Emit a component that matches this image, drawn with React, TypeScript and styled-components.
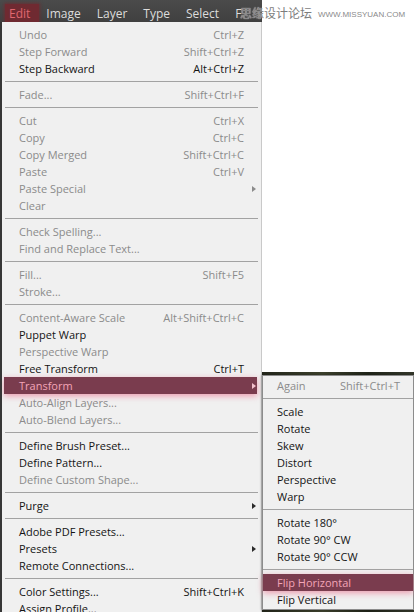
import React from "react";
import styled, { createGlobalStyle, css } from "styled-components";

const GlobalStyle = createGlobalStyle`
  html, body { margin: 0; padding: 0; background: #fff; }
  body { width: 414px; height: 612px; overflow: hidden; font-family: "Open Sans", "Noto Sans", sans-serif; }
`;

const Page = styled.div`
  position: relative;
  width: 414px;
  height: 612px;
  overflow: hidden;
  display: flex;
  flex-direction: column;
  background: #fff;
`;

const MenuBar = styled.div`
  width: 262px;
  height: 22px;
  box-sizing: border-box;
  padding: 4px 0 0 5px;
  display: flex;
  gap: 3px;
  background: linear-gradient(#4b4b4b, #404040);
  flex-shrink: 0;
  overflow: hidden;
`;

const BarItem = styled.div<{ $active?: boolean }>`
  height: 18px;
  padding: 0 9px 0 4px;
  display: flex;
  align-items: center;
  font-size: 12px;
  color: #dcdcdc;
  white-space: nowrap;
  ${(p) =>
    p.$active &&
    css`
      background: #6f2a31;
      color: #e0676f;
      box-shadow: 0 0 3px 1px rgba(111, 42, 49, 0.8);
    `}
`;

const Workspace = styled.div`
  flex: 1;
  display: flex;
  min-height: 0;
`;

const MainMenu = styled.div`
  width: 262px;
  box-sizing: border-box;
  flex-shrink: 0;
  background: #f0f0f0;
  border-left: 2px solid #363636;
  border-right: 1px solid #c9c9c9;
  padding-top: 4px;
  overflow: hidden;
`;

const Canvas = styled.div`
  flex: 1;
  display: flex;
  flex-direction: column;
`;

const Blank = styled.div`
  flex: 1;
  background: #fff;
`;

const Photo = styled.div`
  height: 240px;
  background: linear-gradient(90deg, #23261b, #3b3f2b 40%, #1f2318 70%, #33372a);
`;

const SubMenu = styled.div`
  position: absolute;
  left: 262px;
  top: 375px;
  width: 150px;
  padding: 1px 0;
  background: #f0f0f0;
  border: 1px solid #8c8c8c;
  box-shadow: -1px 0 2px rgba(0, 0, 0, 0.25);
`;

const Row = styled.div<{ $disabled?: boolean; $hot?: boolean; $sub?: boolean }>`
  height: 17px;
  display: grid;
  grid-template-columns: 1fr auto 13px;
  align-items: center;
  margin: ${(p) => (p.$sub ? "0" : "0 4px 0 2px")};
  padding-left: ${(p) => (p.$sub ? "14px" : "15px")};
  font-size: 11px;
  line-height: 17px;
  white-space: nowrap;
  color: ${(p) => (p.$disabled ? "#8b8b8b" : "#141414")};
  ${(p) =>
    p.$hot &&
    css`
      position: relative;
      background: #7a3c4e;
      color: #f3a5b7;
      box-shadow: 0 2px 6px rgba(232, 96, 128, 0.6);
    `}
`;

const Label = styled.span``;

const Shortcut = styled.span`
  text-align: right;
`;

const Arrow = styled.span<{ $color: string }>`
  justify-self: end;
  margin-right: 1px;
  width: 0;
  height: 0;
  border-top: 3.5px solid transparent;
  border-bottom: 3.5px solid transparent;
  border-left: 4px solid ${(p) => p.$color};
`;

const Separator = styled.div<{ $sub?: boolean }>`
  height: 1px;
  margin: ${(p) => (p.$sub ? "4px 0" : "4px 3px")};
  background: #a2a2a2;
`;

const Watermark = styled.div`
  position: absolute;
  top: 5px;
  left: 240px;
  display: flex;
  align-items: center;
  gap: 6px;
  white-space: nowrap;
  pointer-events: none;
`;

const WmCjk = styled.span`
  font-family: "Noto Sans CJK SC", sans-serif;
  font-size: 12px;
  line-height: 16px;
  color: #7d7d7d;
  text-shadow: 0 0 1px #fff;
`;

const WmUrl = styled.span`
  font-family: "Liberation Sans", sans-serif;
  font-size: 8px;
  color: #8a8a8a;
  padding-top: 2px;
`;

type Item =
  | { sep: true }
  | { label: string; sc?: string; d?: boolean; sub?: boolean; hot?: boolean };

const S: Item = { sep: true };

const mainItems: Item[] = [
  { label: "Undo", sc: "Ctrl+Z", d: true },
  { label: "Step Forward", sc: "Shift+Ctrl+Z", d: true },
  { label: "Step Backward", sc: "Alt+Ctrl+Z" },
  S,
  { label: "Fade...", sc: "Shift+Ctrl+F", d: true },
  S,
  { label: "Cut", sc: "Ctrl+X", d: true },
  { label: "Copy", sc: "Ctrl+C", d: true },
  { label: "Copy Merged", sc: "Shift+Ctrl+C", d: true },
  { label: "Paste", sc: "Ctrl+V", d: true },
  { label: "Paste Special", d: true, sub: true },
  { label: "Clear", d: true },
  S,
  { label: "Check Spelling...", d: true },
  { label: "Find and Replace Text...", d: true },
  S,
  { label: "Fill...", sc: "Shift+F5", d: true },
  { label: "Stroke...", d: true },
  S,
  { label: "Content-Aware Scale", sc: "Alt+Shift+Ctrl+C", d: true },
  { label: "Puppet Warp" },
  { label: "Perspective Warp", d: true },
  { label: "Free Transform", sc: "Ctrl+T" },
  { label: "Transform", sub: true, hot: true },
  { label: "Auto-Align Layers...", d: true },
  { label: "Auto-Blend Layers...", d: true },
  S,
  { label: "Define Brush Preset..." },
  { label: "Define Pattern..." },
  { label: "Define Custom Shape...", d: true },
  S,
  { label: "Purge", sub: true },
  S,
  { label: "Adobe PDF Presets..." },
  { label: "Presets", sub: true },
  { label: "Remote Connections..." },
  S,
  { label: "Color Settings...", sc: "Shift+Ctrl+K" },
  { label: "Assign Profile..." },
];

const subItems: Item[] = [
  { label: "Again", sc: "Shift+Ctrl+T", d: true },
  S,
  { label: "Scale" },
  { label: "Rotate" },
  { label: "Skew" },
  { label: "Distort" },
  { label: "Perspective" },
  { label: "Warp" },
  S,
  { label: "Rotate 180°" },
  { label: "Rotate 90° CW" },
  { label: "Rotate 90° CCW" },
  S,
  { label: "Flip Horizontal", hot: true },
  { label: "Flip Vertical" },
];

function renderItems(items: Item[], sub?: boolean) {
  return items.map((it, i) => {
    if ("sep" in it) return <Separator key={i} $sub={sub} />;
    const arrowColor = it.hot ? "#f3c0cc" : it.d ? "#8b8b8b" : "#2a2a2a";
    return (
      <Row key={i} $disabled={it.d} $hot={it.hot} $sub={sub}>
        <Label>{it.label}</Label>
        <Shortcut>{it.sc ?? ""}</Shortcut>
        {it.sub ? <Arrow $color={arrowColor} /> : <span />}
      </Row>
    );
  });
}

export default function App() {
  return (
    <>
      <GlobalStyle />
      <Page>
        <MenuBar>
          <BarItem $active>Edit</BarItem>
          <BarItem>Image</BarItem>
          <BarItem>Layer</BarItem>
          <BarItem>Type</BarItem>
          <BarItem>Select</BarItem>
          <BarItem>F</BarItem>
        </MenuBar>
        <Workspace>
          <MainMenu>{renderItems(mainItems)}</MainMenu>
          <Canvas>
            <Blank />
            <Photo />
          </Canvas>
        </Workspace>
        <SubMenu>{renderItems(subItems, true)}</SubMenu>
        <Watermark>
          <WmCjk>思缘设计论坛</WmCjk>
          <WmUrl>WWW.MISSYUAN.COM</WmUrl>
        </Watermark>
      </Page>
    </>
  );
}
